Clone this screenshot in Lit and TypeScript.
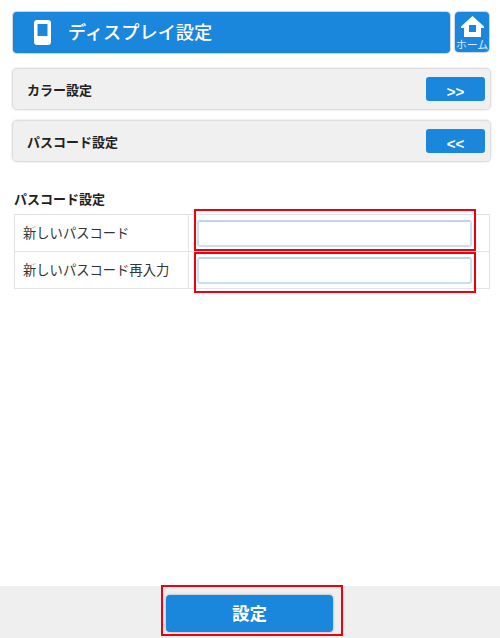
import { LitElement, html, css } from "lit";
import { customElement } from "lit/decorators.js";

@customElement("app-root")
export class AppRoot extends LitElement {
  static styles = css`
    :host {
      display: flex;
      flex-direction: column;
      height: 638px;
      background: #fff;
      font-family: "Noto Sans CJK JP", "Liberation Sans", sans-serif;
      color: #222;
    }
    .main {
      flex: 1;
      padding: 12px 10px 0 13px;
    }
    .top {
      display: flex;
      gap: 5px;
      height: 41px;
      padding-right: 1px;
    }
    .title {
      flex: 1;
      display: flex;
      align-items: center;
      gap: 17px;
      padding-left: 21px;
      background: #1a87dc;
      border-radius: 4px;
      box-shadow: 0 0 1px 1px #c9d3da;
      color: #fff;
      font-size: 18.2px;
      font-weight: 500;
    }
    .title span {
      padding-bottom: 3px;
    }
    .home {
      width: 34px;
      height: 40px;
      display: flex;
      flex-direction: column;
      align-items: center;
      background: #1a87dc;
      border-radius: 4px;
      box-shadow: 0 0 1px 1px #c9d3da;
      color: #d5e9f8;
      font-size: 11px;
      line-height: 12px;
      white-space: nowrap;
      overflow: hidden;
    }
    .home svg {
      margin-top: 3px;
      flex: none;
    }
    .row {
      display: flex;
      align-items: center;
      justify-content: space-between;
      height: 40px;
      margin-top: 16px;
      padding: 0 5px 0 14px;
      background: #f0f0f0;
      border-radius: 4px;
      box-shadow: 0 0 2px 1px #d2d2d2;
      font-size: 13px;
      font-weight: 700;
    }
    .row + .row {
      margin-top: 12px;
    }
    .toggle {
      width: 59px;
      height: 24px;
      padding: 5px 0 0;
      border: 0;
      border-radius: 3px;
      background: #1a87dc;
      color: #fff;
      font: 700 15px "Liberation Sans", sans-serif;
    }
    h2 {
      margin: 28px 0 6px 1px;
      font-size: 13px;
      line-height: 19px;
      font-weight: 700;
    }
    table {
      width: 476px;
      margin-left: 1px;
      border-collapse: collapse;
      table-layout: fixed;
    }
    td {
      height: 36px;
      padding: 0;
      border: 1px solid #e3e3e3;
      font-size: 13.3px;
      color: #333;
    }
    td:first-child {
      width: 165px;
      height: 34px;
      padding: 0 0 2px 8px;
    }
    .field {
      position: relative;
      padding-left: 8px;
    }
    input {
      display: block;
      box-sizing: border-box;
      width: 275px;
      height: 27px;
      border: 2px solid #c9e0f2;
      border-top-color: #bfd4e6;
      border-radius: 3px;
      background: #fff;
      outline: 0;
    }
    .mark {
      position: absolute;
      box-sizing: border-box;
      border: 2px solid #f0000f;
      pointer-events: none;
    }
    .field .mark {
      left: 5px;
      width: 282px;
    }
    .field .first {
      top: -11px;
      height: 42px;
    }
    .field .second {
      top: -5px;
      height: 41px;
    }
    .footer {
      display: flex;
      height: 52px;
      box-sizing: border-box;
      padding: 9px 0 0 166px;
      background: #efefef;
    }
    .submit {
      position: relative;
      width: 167px;
      height: 37px;
      border: 0;
      border-radius: 4px;
      background: #1a87dc;
      box-shadow: 0 0 2px 1px #c4ccd2;
      color: #fff;
      font: 700 17.5px "Noto Sans CJK JP", sans-serif;
      padding: 0 0 3px;
    }
    .submit .mark {
      left: -5px;
      top: -10px;
      width: 182px;
      height: 51px;
    }
  `;

  render() {
    return html`
      <div class="main">
        <div class="top">
          <div class="title">
            <svg width="17" height="25" viewBox="0 0 17 25">
              <path fill="#fff" fill-rule="evenodd" d="M3 0h11a3 3 0 0 1 3 3v19a3 3 0 0 1-3 3H3a3 3 0 0 1-3-3V3a3 3 0 0 1 3-3zM3.500 4v12h10V4z" />
            </svg>
            <span>ディスプレイ設定</span>
          </div>
          <div class="home">
            <svg width="23" height="23" viewBox="0 0 23 23">
              <path fill="#fff" fill-rule="evenodd" d="M11.500 1 23 11.500v1.500h-3v9H3v-9H0v-1.500zM8 10v7h7v-7z" />
            </svg>
            <span>ホーム</span>
          </div>
        </div>
        <div class="row">
          <span>カラー設定</span>
          <button class="toggle">&gt;&gt;</button>
        </div>
        <div class="row">
          <span>パスコード設定</span>
          <button class="toggle">&lt;&lt;</button>
        </div>
        <h2>パスコード設定</h2>
        <table>
          <tr>
            <td>新しいパスコード</td>
            <td><div class="field"><input type="password" /><div class="mark first"></div></div></td>
          </tr>
          <tr>
            <td>新しいパスコード再入力</td>
            <td><div class="field"><input type="password" /><div class="mark second"></div></div></td>
          </tr>
        </table>
      </div>
      <div class="footer">
        <button class="submit">設定<div class="mark"></div></button>
      </div>
    `;
  }
}
